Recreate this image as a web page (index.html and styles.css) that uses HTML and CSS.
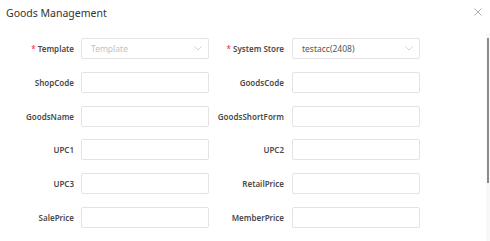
FILE: index.html
```html
<!DOCTYPE html>
<html lang="en">
<head>
    <meta charset="UTF-8">
    <meta name="viewport" content="width=device-width, initial-scale=1.0">
    <title>Goods Management</title>
    <link rel="stylesheet" href="styles.css">
</head>
<body>
    <div id="dialog">
        <div class="dialog-header">
            <span class="dialog-title">Goods Management</span>
            <span class="dialog-close">
                <svg width="8" height="8" viewBox="0 0 8 8"><path d="M0.5 0.5L7.5 7.5M7.5 0.5L0.5 7.5" stroke="#a6a6a6" stroke-width="0.9" fill="none"/></svg>
            </span>
        </div>

        <div class="dialog-body">
            <div class="form-grid">
                <label class="form-label"><span class="required">*</span>Template</label>
                <div class="select-box placeholder">
                    <span>Template</span>
                    <svg class="chevron" width="8" height="5" viewBox="0 0 8 5"><path d="M0.5 0.5L4 4L7.5 0.5" stroke="#c8c8c8" stroke-width="0.8" fill="none"/></svg>
                </div>
                <label class="form-label"><span class="required">*</span>System Store</label>
                <div class="select-box">
                    <span>testacc(2408)</span>
                    <svg class="chevron" width="8" height="5" viewBox="0 0 8 5"><path d="M0.5 0.5L4 4L7.5 0.5" stroke="#c8c8c8" stroke-width="0.8" fill="none"/></svg>
                </div>

                <label class="form-label">ShopCode</label>
                <input class="text-input" type="text">
                <label class="form-label">GoodsCode</label>
                <input class="text-input" type="text">

                <label class="form-label">GoodsName</label>
                <input class="text-input" type="text">
                <label class="form-label">GoodsShortForm</label>
                <input class="text-input" type="text">

                <label class="form-label">UPC1</label>
                <input class="text-input" type="text">
                <label class="form-label">UPC2</label>
                <input class="text-input" type="text">

                <label class="form-label">UPC3</label>
                <input class="text-input" type="text">
                <label class="form-label">RetailPrice</label>
                <input class="text-input" type="text">

                <label class="form-label">SalePrice</label>
                <input class="text-input" type="text">
                <label class="form-label">MemberPrice</label>
                <input class="text-input" type="text">
            </div>
            <div class="scrollbar">
                <div class="scroll-thumb"></div>
            </div>
        </div>
    </div>
</body>
</html>
```

FILE: styles.css
```css
body {
    margin: 0;
    padding: 0;
    background: #fff;
    font-family: 'Noto Sans', 'Open Sans', sans-serif;
    color: #333;
    width: 490px;
    height: 241px;
    overflow: hidden;
}
#dialog {
    position: relative;
    height: 241px;
}
.dialog-header {
    height: 26px;
    display: flex;
    align-items: center;
    justify-content: space-between;
    padding: 0 8px 0 6px;
}
.dialog-title {
    font-size: 10.5px;
    color: #333;
    margin-top: -1px;
}
.dialog-close {
    display: flex;
    margin-top: -2px;
}
.dialog-body {
    display: flex;
    justify-content: space-between;
    padding-top: 12px;
}
.form-grid {
    display: grid;
    grid-template-columns: 81px 128px 83px 128px;
    grid-auto-rows: 21px;
    row-gap: 12.8px;
}
.form-label {
    display: flex;
    align-items: center;
    justify-content: flex-end;
    font-size: 8px;
    font-weight: 600;
    color: #4a4a4a;
    white-space: nowrap;
}
.form-grid .form-label:nth-child(4n+1) {
    padding-right: 7px;
}
.form-grid .form-label:nth-child(4n+3) {
    padding-right: 8px;
}
.required {
    color: #f5222d;
    font-weight: normal;
    margin-right: 2px;
}
.select-box,
.text-input {
    box-sizing: border-box;
    height: 21px;
    width: 128px;
    border: 1px solid #e3e3e3;
    border-radius: 2px;
    background: #fff;
    margin: 0;
}
.select-box {
    display: flex;
    align-items: center;
    justify-content: space-between;
    padding: 0 6px 0 9px;
    font-size: 8.5px;
    color: #555;
}
.select-box.placeholder {
    color: #c2c2c2;
}
.chevron {
    display: block;
}
.scrollbar {
    width: 4px;
    height: 210px;
    margin-top: -5px;
    background: #f8f8f8;
    position: relative;
}
.scroll-thumb {
    position: absolute;
    left: 1px;
    top: 5px;
    width: 2px;
    height: 145px;
    background: #8c8c8c;
}
```
